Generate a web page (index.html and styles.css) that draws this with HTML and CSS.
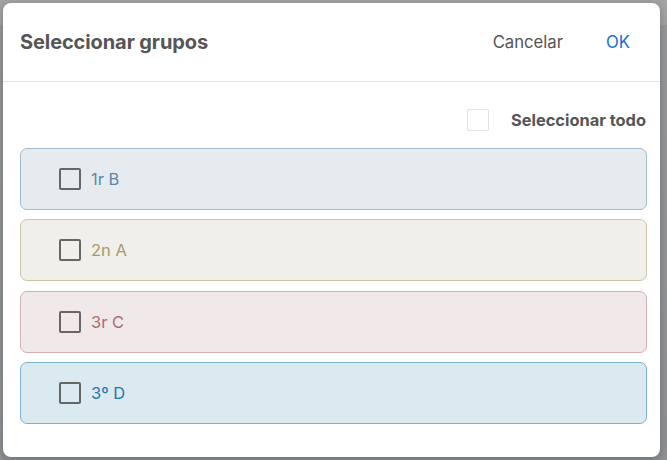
FILE: index.html
```html
<!DOCTYPE html>
<html lang="es">
<head>
    <meta charset="UTF-8">
    <meta name="viewport" content="width=device-width, initial-scale=1.0">
    <title>Seleccionar grupos</title>
    <link rel="stylesheet" href="styles.css">
</head>
<body>

    <div class="backdrop">
        <div class="dialog">
            <!-- Header -->
            <div class="dialog-header">
                <h1>Seleccionar grupos</h1>
                <div class="actions">
                    <button class="btn-cancel">Cancelar</button>
                    <button class="btn-ok">OK</button>
                </div>
            </div>

            <!-- Body -->
            <div class="dialog-body">
                <label class="select-all">
                    <span class="check-light"></span>
                    <span>Seleccionar todo</span>
                </label>

                <div class="group group-blue">
                    <span class="check"></span>
                    <span class="group-name">1r B</span>
                </div>
                <div class="group group-sand">
                    <span class="check"></span>
                    <span class="group-name">2n A</span>
                </div>
                <div class="group group-rose">
                    <span class="check"></span>
                    <span class="group-name">3r C</span>
                </div>
                <div class="group group-sky">
                    <span class="check"></span>
                    <span class="group-name">3º D</span>
                </div>
            </div>
        </div>
    </div>

</body>
</html>
```

FILE: styles.css
```css
/* Global Styles */
* {
    margin: 0;
    padding: 0;
    box-sizing: border-box;
}

body {
    font-family: 'Inter', 'Roboto', sans-serif;
    background-color: #9c9c9c;
    color: #555;
    width: 667px;
    height: 460px;
    overflow: hidden;
}

/* Backdrop */
.backdrop {
    height: 460px;
    padding: 3px 7px 3px 3px;
    background: linear-gradient(#a3a3a3 0, #a3a3a3 25px, #969899 25px, #8f9294 100%);
}

/* Dialog */
.dialog {
    height: 454px;
    background: #fff;
    border-radius: 8px;
    box-shadow: 0 2px 8px rgba(0, 0, 0, 0.25);
    display: flex;
    flex-direction: column;
}

.dialog-header {
    height: 79px;
    display: flex;
    align-items: center;
    justify-content: space-between;
    padding: 0 14px 0 17px;
    border-bottom: 1px solid #e2e2e2;
}

h1 {
    font-size: 20px;
    font-weight: 700;
    color: #555;
    letter-spacing: -0.1px;
}

.actions {
    display: flex;
    gap: 11px;
}

button {
    background: none;
    border: none;
    font-family: inherit;
    font-size: 16.7px;
    padding: 8px 16px;
    cursor: pointer;
}

.btn-cancel {
    color: #555;
}

.btn-ok {
    color: #1a6fd6;
}

.dialog-body {
    padding: 27px 13px 0 17px;
    display: flex;
    flex-direction: column;
    gap: 9.4px;
}

.select-all {
    display: flex;
    align-items: center;
    justify-content: flex-end;
    gap: 22px;
    font-size: 16.4px;
    font-weight: 700;
    color: #555;
    padding-right: 1px;
    margin-bottom: 7.6px;
}

.check-light {
    width: 22px;
    height: 22px;
    border: 1px solid #dfe3e6;
    border-radius: 2px;
}

/* Group cards */
.group {
    height: 62px;
    display: flex;
    align-items: center;
    gap: 10px;
    padding-left: 38px;
    border: 1px solid;
    border-radius: 7px;
}

.check {
    width: 22px;
    height: 22px;
    border: 2px solid #666;
    border-radius: 2px;
}

.group-name {
    font-size: 16.5px;
}

.group-blue {
    background: #e6ebf0;
    border-color: #a2bbcf;
    color: #5b86a8;
}

.group-sand {
    background: #f0efea;
    border-color: #cfc4a8;
    color: #a8996c;
}

.group-rose {
    background: #f0e8e9;
    border-color: #d3b0b3;
    color: #a8706f;
}

.group-sky {
    background: #dbe9f1;
    border-color: #7db0d1;
    color: #1f77a8;
}
```
